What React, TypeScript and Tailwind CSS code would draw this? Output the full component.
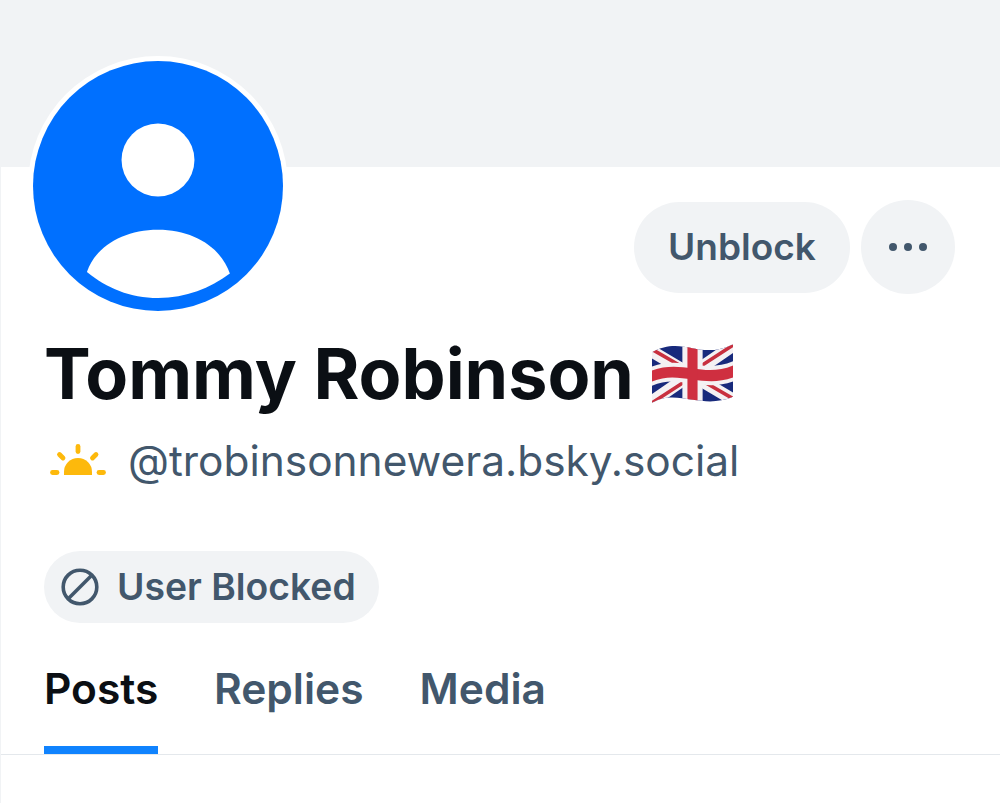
import React from 'react';

const FUENTE = "font-['Inter','Liberation_Sans',sans-serif]";

function Avatar() {
  return (
    <div className="absolute left-[27px] top-[56px] w-[260px] h-[260px] rounded-full bg-white p-[5px]">
      <svg viewBox="0 0 24 24" className="w-full h-full block" fill="none">
        <circle cx="12" cy="12" r="12" fill="#0070ff" />
        <circle cx="12" cy="9.5" r="3.5" fill="#fff" />
        <path d="M5.18 20.25C6 17.8 8.7 16.2 12 16.2s6 1.6 6.9 4.2C17 21.8 14.7 22.75 12 22.75S7.1 21.8 5.18 20.25Z" fill="#fff" />
      </svg>
    </div>
  );
}

function IconoSol() {
  return (
    <svg viewBox="0 0 60 36" className="w-[60px] h-[36px] shrink-0" fill="none">
      <path d="M17 32v-3a14 14 0 0 1 28 0v3Z" fill="#fdb90c" />
      <g stroke="#fdb90c" strokeWidth="4.8" strokeLinecap="round">
        <path d="M31 3.500v5" />
        <path d="M12.500 11.500l3.500 3.500" />
        <path d="M49 11.500L45.500 15" />
        <path d="M5.500 29.500h4.500" />
        <path d="M52 29.500h4.500" />
      </g>
    </svg>
  );
}

function Bandera() {
  return (
    <svg viewBox="0 0 80 60" className="w-[81px] h-[61px] shrink-0">
      <defs>
        <clipPath id="ondaBandera">
          <path d="M0 8C14 0 26 1 40 4S66 7 80 0V52C66 58 54 57 40 55S14 50 0 58Z" />
        </clipPath>
      </defs>
      <g clipPath="url(#ondaBandera)">
        <rect width="80" height="60" fill="#182a7c" />
        <path d="M-2 6L82 56M82 0L-2 58" stroke="#f4f1f3" strokeWidth="12" />
        <path d="M-2 4L38 27M82 55L44 33M80 1L46 23M0 58L34 36" stroke="#c8303f" strokeWidth="3.500" />
        <path d="M0 22C14 17 26 18 40 20S66 23 80 17V37C66 42 54 41 40 39S14 35 0 41Z" fill="#f4f1f3" />
        <rect x="30" y="0" width="20" height="60" fill="#f4f1f3" />
        <path d="M0 26C14 21 26 22 40 24S66 27 80 21V33C66 38 54 37 40 35S14 31 0 37Z" fill="#cf2f40" />
        <rect x="35" y="0" width="10" height="60" fill="#cf2f40" />
      </g>
    </svg>
  );
}

function IconoBloqueo() {
  return (
    <svg viewBox="0 0 38 38" className="w-[38px] h-[38px] shrink-0" fill="none" stroke="#42576c" strokeWidth="3.600">
      <circle cx="19" cy="19" r="16.800" />
      <path d="M7.500 30.500L30.500 7.500" />
    </svg>
  );
}

export default function App() {
  return (
    <div className={`${FUENTE} relative w-[1000px] h-[803px] bg-white border-l border-[#f1f3f5] overflow-hidden`}>
      <div className="h-[167px] bg-[#f1f3f5]" />
      <Avatar />

      <div className="flex justify-end items-center gap-[11px] pr-[45px] pt-[33px] h-[127px]">
        <button className="w-[216px] h-[91px] rounded-full bg-[#f1f3f5] text-[#42576c] text-[37px] font-semibold">
          Unblock
        </button>
        <button className="w-[94px] h-[94px] rounded-full bg-[#f1f3f5] flex items-center justify-center gap-[7px]">
          <span className="w-[8px] h-[8px] rounded-full bg-[#42576c]" />
          <span className="w-[8px] h-[8px] rounded-full bg-[#42576c]" />
          <span className="w-[8px] h-[8px] rounded-full bg-[#42576c]" />
        </button>
      </div>

      <div className="pl-[43px] pt-[40px] flex items-center gap-[18px] h-[120px]">
        <h1 className="text-[#0b0f14] text-[70px] leading-[80px] font-bold">Tommy Robinson</h1>
        <Bandera />
      </div>

      <div className="pl-[46px] flex items-center gap-[21px] h-[54px] mt-[20px]">
        <IconoSol />
        <span className="text-[#42576c] text-[42.400px] leading-[54px]">@trobinsonnewera.bsky.social</span>
      </div>

      <div className="pl-[43px] pt-[63px]">
        <div className="w-[335px] h-[72px] rounded-full bg-[#f1f3f5] flex items-center pl-[17px] gap-[18px] text-[#42576c] text-[37.300px] font-semibold">
          <IconoBloqueo />
          <span>User Blocked</span>
        </div>
      </div>

      <div className="absolute left-0 right-0 top-[754px] h-px bg-[#e4e8ec]" />
      <nav className="flex pl-[43px] gap-[56px] pt-[37px] text-[42.500px] leading-[58px] font-semibold text-[#42576c]">
        <div className="relative w-[114px] h-[92px] text-[#0b0f14] text-center">
          Posts
          <div className="absolute left-0 right-0 top-[86px] h-[8px] bg-[#1083fe]" />
        </div>
        <div>Replies</div>
        <div>Media</div>
      </nav>
    </div>
  );
}
